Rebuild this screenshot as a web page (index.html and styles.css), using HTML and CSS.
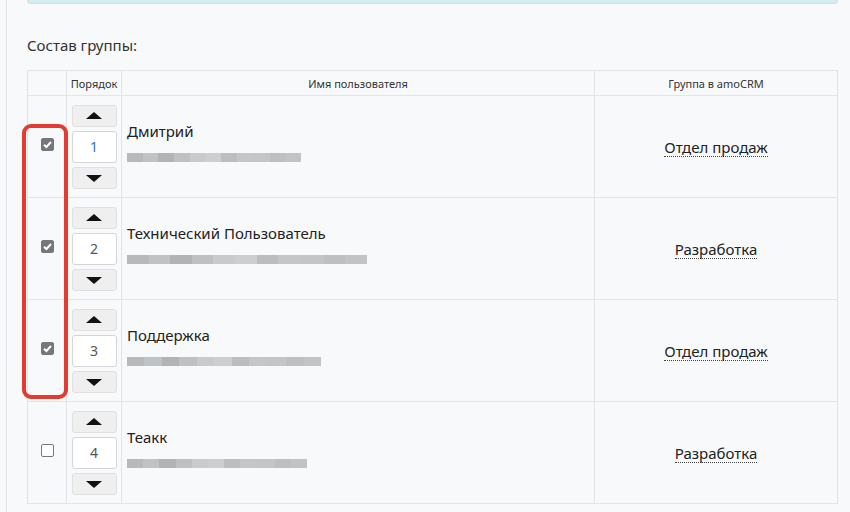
FILE: index.html
```html
<!DOCTYPE html>
<html lang="ru">

<head>
    <meta charset="UTF-8">
    <meta name="viewport" content="width=device-width, initial-scale=1.0">
    <title>Состав группы</title>
    <link rel="stylesheet" href="styles.css">
</head>

<body>
    <div class="page">
        <div class="alert"></div>

        <div class="title">Состав группы:</div>

        <div class="table-wrap">
            <table class="members">
                <thead>
                    <tr>
                        <th class="col-check"></th>
                        <th class="col-order">Порядок</th>
                        <th class="col-name">Имя пользователя</th>
                        <th class="col-group">Группа в amoCRM</th>
                    </tr>
                </thead>
                <tbody>
                    <tr>
                        <td class="col-check"><span class="check on"></span></td>
                        <td class="col-order">
                            <div class="order">
                                <button class="arrow up"></button>
                                <div class="num active">1</div>
                                <button class="arrow down"></button>
                            </div>
                        </td>
                        <td class="col-name">
                            <div class="user-name">Дмитрий</div>
                            <div class="blur" style="width: 174px;"></div>
                        </td>
                        <td class="col-group"><span class="group">Отдел продаж</span></td>
                    </tr>
                    <tr>
                        <td class="col-check"><span class="check on"></span></td>
                        <td class="col-order">
                            <div class="order">
                                <button class="arrow up"></button>
                                <div class="num">2</div>
                                <button class="arrow down"></button>
                            </div>
                        </td>
                        <td class="col-name">
                            <div class="user-name">Технический Пользователь</div>
                            <div class="blur" style="width: 240px;"></div>
                        </td>
                        <td class="col-group"><span class="group">Разработка</span></td>
                    </tr>
                    <tr>
                        <td class="col-check"><span class="check on"></span></td>
                        <td class="col-order">
                            <div class="order">
                                <button class="arrow up"></button>
                                <div class="num">3</div>
                                <button class="arrow down"></button>
                            </div>
                        </td>
                        <td class="col-name">
                            <div class="user-name">Поддержка</div>
                            <div class="blur" style="width: 194px;"></div>
                        </td>
                        <td class="col-group"><span class="group">Отдел продаж</span></td>
                    </tr>
                    <tr>
                        <td class="col-check"><span class="check"></span></td>
                        <td class="col-order">
                            <div class="order">
                                <button class="arrow up"></button>
                                <div class="num">4</div>
                                <button class="arrow down"></button>
                            </div>
                        </td>
                        <td class="col-name">
                            <div class="user-name">Теакк</div>
                            <div class="blur" style="width: 180px;"></div>
                        </td>
                        <td class="col-group"><span class="group">Разработка</span></td>
                    </tr>
                </tbody>
            </table>

            <!-- highlight around checked rows -->
            <div class="highlight"></div>
        </div>
    </div>
</body>

</html>
```

FILE: styles.css
```css
body {
    margin: 0;
    background: #f8f9fb;
    font-family: "Noto Sans", "Open Sans", sans-serif;
    color: #222;
    height: 512px;
    overflow: hidden;
}

.page {
    margin-left: 6px;
    border-left: 1px solid #e2e4e7;
    padding: 0 12px 0 20px;
    height: 512px;
}

.alert {
    height: 3px;
    background: #d3edf1;
    border: 1px solid #c3e4ea;
    border-top: none;
    border-radius: 0 0 5px 5px;
}

.title {
    font-size: 15px;
    margin-top: 31px;
    line-height: 20px;
    color: #333;
}

.table-wrap {
    position: relative;
    margin-top: 15px;
    width: 811px;
}

.members {
    width: 811px;
    border-collapse: collapse;
    table-layout: fixed;
}

.members th,
.members td {
    border: 1px solid #e2e4e7;
    padding: 0;
}

.members th {
    height: 24px;
    font-size: 11px;
    font-weight: 400;
    color: #333;
}

.members td {
    height: 101px;
}

.col-check {
    width: 38px;
    text-align: center;
}

.col-order {
    width: 54px;
}

.col-name {
    width: 472px;
}

.members td.col-name {
    padding-left: 5px;
    vertical-align: middle;
}

.members td.col-group {
    text-align: center;
}

.check {
    display: inline-block;
    width: 13px;
    height: 13px;
    box-sizing: border-box;
    border: 1px solid #777;
    border-radius: 2px;
    background: #fff;
    vertical-align: middle;
    position: relative;
    top: -4px;
}

.check.on {
    background: #777 url("data:image/svg+xml;utf8,<svg xmlns='http://www.w3.org/2000/svg' viewBox='0 0 13 13'><path d='M3 6.8 L5.4 9 L10 4' fill='none' stroke='white' stroke-width='2'/></svg>") center / 13px 13px no-repeat;
    border-color: #777;
}

.order {
    display: flex;
    flex-direction: column;
    align-items: center;
    gap: 4px;
}

.arrow {
    width: 45px;
    height: 22px;
    border: 1px solid #e0e0e0;
    border-radius: 3px;
    background: #efefef;
    padding: 0;
    position: relative;
}

.arrow::after {
    content: "";
    position: absolute;
    left: 50%;
    top: 50%;
    margin-left: -8px;
    border-left: 8px solid transparent;
    border-right: 8px solid transparent;
}

.arrow.up::after {
    margin-top: -4px;
    border-bottom: 7px solid #111;
}

.arrow.down::after {
    margin-top: -3px;
    border-top: 7px solid #111;
}

.num {
    width: 45px;
    height: 32px;
    box-sizing: border-box;
    border: 1px solid #d4d6d9;
    border-radius: 3px;
    background: #fff;
    text-align: center;
    line-height: 30px;
    font-size: 14px;
    color: #555;
}

.num.active {
    color: #3d6fb8;
}

.user-name {
    font-size: 15px;
    line-height: 20px;
    color: #222;
    margin-top: -11px;
}

.blur {
    height: 9px;
    margin-top: 12px;
    background: linear-gradient(90deg, #b9b9b9 0 9%, #c0c3c5 9% 18%, #b3b3b3 18% 27%, #bfc0c2 27% 36%, #c9cacb 36% 45%, #ccced0 45% 54%, #bcbdbe 54% 63%, #c5c6c7 63% 72%, #c4c5c6 72% 82%, #bebfc0 82% 91%, #c2c3c4 91% 100%);
}

.group {
    font-size: 15px;
    color: #222;
    border-bottom: 1px dotted #444;
    line-height: 18px;
    display: inline-block;
}

.highlight {
    position: absolute;
    left: -5px;
    top: 54px;
    width: 46px;
    height: 275px;
    box-sizing: border-box;
    border: 4px solid #e53a30;
    border-radius: 9px;
}
```
